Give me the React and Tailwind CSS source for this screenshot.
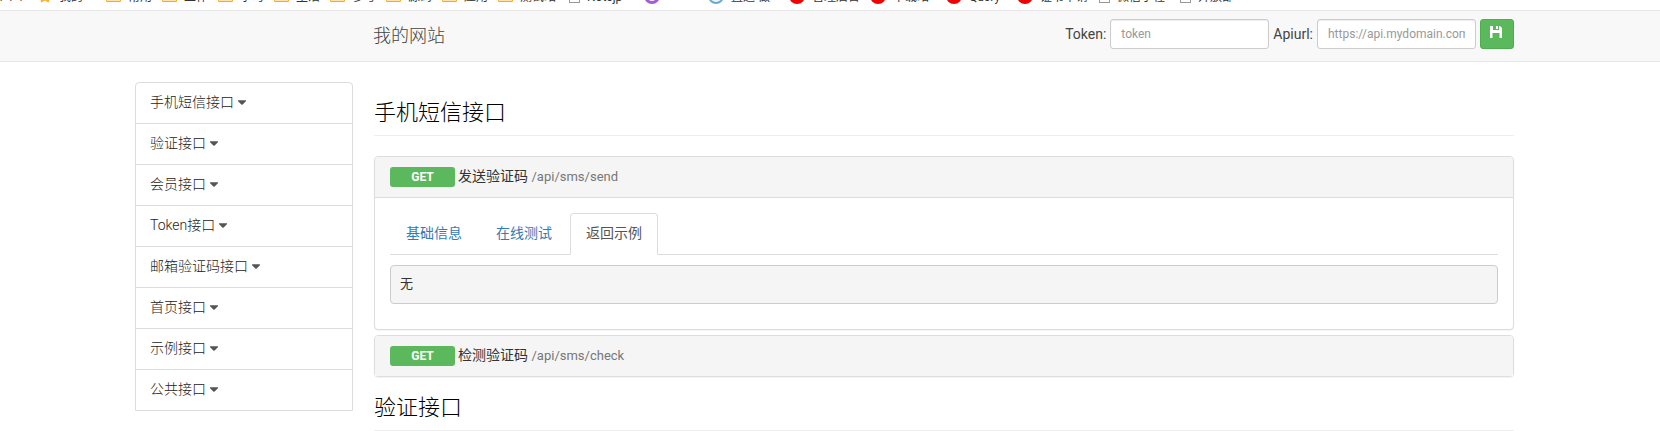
import React, { useState } from 'react';
import { FaStar, FaCaretDown } from 'react-icons/fa';

const bookmarks = [
  { icon: 'none', title: '八 个', width: 'w-[38px]' },
  { icon: 'star', title: '我的', width: 'w-[68px]' },
  { icon: 'folder', title: '常用', width: 'w-[56px]' },
  { icon: 'folder', title: '工作', width: 'w-[56px]' },
  { icon: 'folder', title: '学习', width: 'w-[56px]' },
  { icon: 'folder', title: '生活', width: 'w-[56px]' },
  { icon: 'folder', title: '参考', width: 'w-[56px]' },
  { icon: 'folder', title: '源码', width: 'w-[56px]' },
  { icon: 'folder', title: '应用', width: 'w-[56px]' },
  { icon: 'folder', title: '测试站', width: 'w-[71px]' },
  { icon: 'page', title: 'Notejp', width: 'w-[75px]' },
  { icon: 'ring', title: '', width: 'w-[64px]' },
  { icon: 'globe', title: '直通 做', width: 'w-[81px]' },
  { icon: 'dot', title: '管理后台', width: 'w-[81px]' },
  { icon: 'dot', title: '下载站', width: 'w-[76px]' },
  { icon: 'dot', title: 'Query', width: 'w-[71px]' },
  { icon: 'dot', title: '证书申请', width: 'w-[82px]' },
  { icon: 'page', title: '微信小程', width: 'w-[81px]' },
  { icon: 'page', title: '开放部', width: 'w-[81px]' },
];

const menus = [
  '手机短信接口',
  '验证接口',
  '会员接口',
  'Token接口',
  '邮箱验证码接口',
  '首页接口',
  '示例接口',
  '公共接口',
];

const tabs = ['基础信息', '在线测试', '返回示例'];

const BookmarkIcon = ({ type }) => {
  if (type === 'star') {
    return <FaStar className="-mb-px size-[14px] shrink-0" color="#fbaf2b" />;
  }
  if (type === 'folder') {
    return <span className="h-[13px] w-[15px] shrink-0 rounded-[1px] border border-[#f9ab1c] bg-[#fde3a7]" />;
  }
  if (type === 'page') {
    return <span className="-mb-px h-4 w-[11px] shrink-0 border border-[#999] bg-white" />;
  }
  if (type === 'ring') {
    return <span className="-mb-[2px] size-4 shrink-0 rounded-full border-3 border-[#a55bd8]" />;
  }
  if (type === 'globe') {
    return <span className="-mb-[2px] size-4 shrink-0 rounded-full border-2 border-[#6aa9cf] bg-[#e8f3fa]" />;
  }
  if (type === 'dot') {
    return <span className="-mb-[2px] size-4 shrink-0 rounded-full bg-[#f00000]" />;
  }
  return null;
};

const SaveIcon = () => (
  <svg className="size-3" viewBox="0 0 12 12" fill="currentColor" aria-hidden="true">
    <path d="M0 0h3v4h6V0h1l2 2v10H9.500V7h-7v5H0z" />
    <path d="M6 0h2v3H6z" />
  </svg>
);

const Panel = ({ title, path, children }) => (
  <div className="rounded-sm border border-[#ddd] bg-white shadow-[0_1px_1px_rgba(0,0,0,0.05)]">
    <h4 className={`flex items-center gap-[3px] rounded-t-sm bg-[#f5f5f5] px-[15px] py-[10px] leading-5 ${children ? 'border-b border-[#ddd]' : ''}`}>
      <span className="w-[65px] rounded-[3px] bg-[#5cb85c] text-center text-xs leading-5 font-bold text-white">GET</span>
      <a href="#" className="-mt-[2px] text-[#333]">
        {title} <span className="text-[13px] text-[#777]">{path}</span>
      </a>
    </h4>
    {children}
  </div>
);

const SectionTitle = ({ children }) => (
  <h2 className="mb-5 border-b border-[#eee] pt-[19px] pb-[10px] text-[22px] leading-6 font-light text-black">{children}</h2>
);

const App = () => {
  const [token, setToken] = useState('');
  const [apiUrl, setApiUrl] = useState('');
  const [activeTab, setActiveTab] = useState('返回示例');

  const inputClass =
    'h-[30px] w-[159px] rounded-[3px] border border-[#ccc] bg-white px-[10px] text-xs text-[#555] shadow-[inset_0_1px_1px_rgba(0,0,0,0.075)] placeholder:text-[#999] focus:border-[#66afe9] focus:outline-none';

  return (
    <div className="bg-white font-['Roboto','Noto_Sans_CJK_SC',sans-serif] text-sm leading-5 text-[#333]">
      <div className="flex h-[10px] items-end overflow-hidden pb-2">
        {bookmarks.map((item, index) => (
          <div key={index} className={`flex shrink-0 items-end gap-[7px] text-xs leading-[10px] whitespace-nowrap ${item.width}`}>
            <BookmarkIcon type={item.icon} />
            {item.title && <span>{item.title}</span>}
          </div>
        ))}
      </div>

      <header className="border-y border-[#e7e7e7] bg-[#f8f8f8]">
        <div className="flex h-[50px] items-start justify-between pr-[146px] pl-[373px]">
          <a href="#" className="py-[15px] text-lg leading-5 font-light text-[#444]">我的网站</a>
          <form className="flex items-center gap-1 pt-2" onSubmit={(e) => e.preventDefault()}>
            <label htmlFor="token" className="text-[#444]">Token:</label>
            <input id="token" type="text" placeholder="token" className={inputClass} value={token} onChange={(e) => setToken(e.target.value)} />
            <label htmlFor="apiUrl" className="text-[#444]">Apiurl:</label>
            <input id="apiUrl" type="text" placeholder="https://api.mydomain.com" className={inputClass} value={apiUrl} onChange={(e) => setApiUrl(e.target.value)} />
            <button type="submit" aria-label="Save" className="flex h-[30px] w-[34px] items-center justify-center rounded-[3px] border border-[#4cae4c] bg-[#5cb85c] pr-[2px] pb-1 text-white">
              <SaveIcon />
            </button>
          </form>
        </div>
      </header>

      <div className="flex items-start gap-[21px] pt-5 pr-[146px] pl-[135px]">
        <nav className="w-[218px] shrink-0 divide-y divide-[#ddd] rounded-t-sm border border-[#ddd]">
          {menus.map((menu) => (
            <a key={menu} href="#" className="flex items-center gap-[3px] px-[14px] pt-[9px] pb-[11px] font-light text-[#222]">
              {menu}
              <FaCaretDown className="h-[14px] w-[10px] text-[#555]" />
            </a>
          ))}
        </nav>

        <main className="min-w-0 grow">
          <SectionTitle>手机短信接口</SectionTitle>
          <div className="flex flex-col gap-[5px]">
            <Panel title="发送验证码" path="/api/sms/send">
              <div className="p-[15px]">
                <div className="flex gap-[2px] border-b border-[#ddd]">
                  {tabs.map((tab) => (
                    <button
                      key={tab}
                      type="button"
                      onClick={() => setActiveTab(tab)}
                      className={`-mb-px rounded-t-sm border px-[15px] pt-[9px] pb-[11px] ${
                        tab === activeTab
                          ? 'border-[#ddd] border-b-white bg-white text-[#555]'
                          : 'border-transparent text-[#337ab7]'
                      }`}
                    >
                      {tab}
                    </button>
                  ))}
                </div>
                <pre className="my-[10px] rounded-sm border border-[#ccc] bg-[#f5f5f5] px-[9px] py-[9px] font-['Liberation_Mono','Noto_Sans_CJK_SC',monospace] text-[13px] leading-[19px]">无</pre>
              </div>
            </Panel>
            <Panel title="检测验证码" path="/api/sms/check" />
          </div>
          <SectionTitle>验证接口</SectionTitle>
        </main>
      </div>
    </div>
  );
};

export default App;
